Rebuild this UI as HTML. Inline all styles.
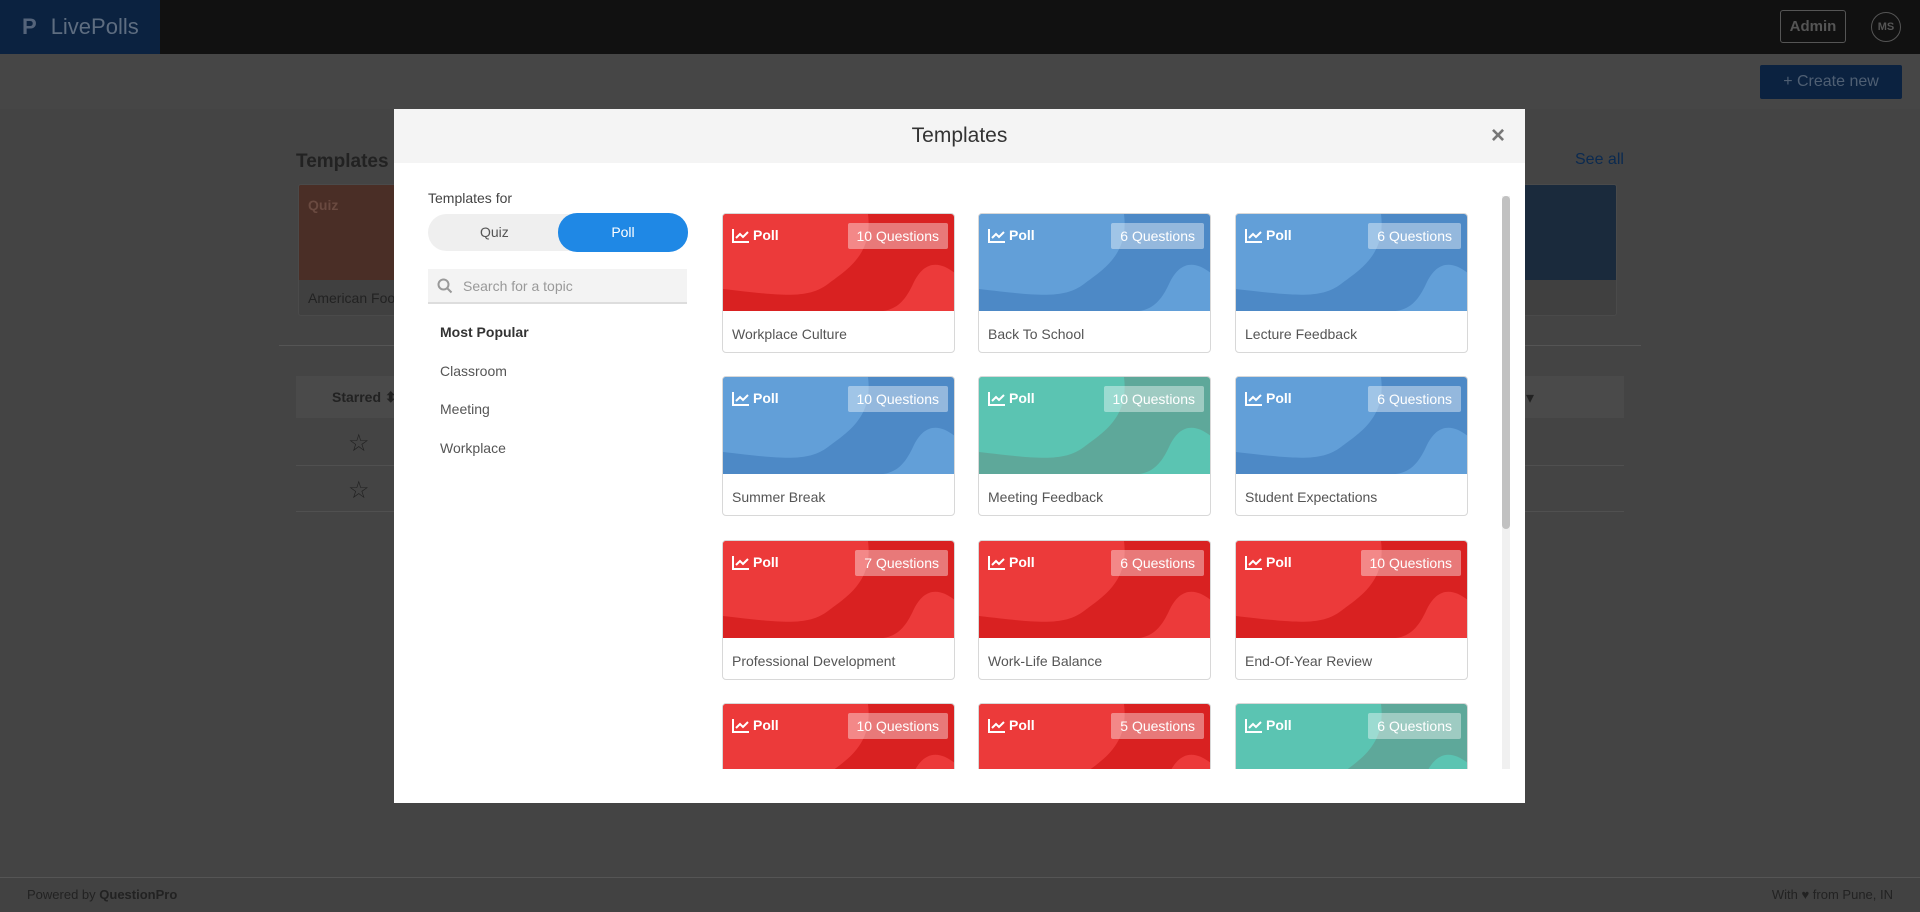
<!DOCTYPE html>
<html style="background:#444"><head><meta charset="utf-8"><style>
*{box-sizing:border-box;margin:0;padding:0}
body{width:1920px;height:912px;overflow:hidden;background:#444;font-family:"Liberation Sans",sans-serif;position:relative;color:#333}
.abs{position:absolute}
.top{left:0;top:0;width:1920px;height:54px;background:#111}
.logo{left:0;top:0;width:160px;height:54px;background:#0b2240;color:#5e6d80;font-size:22px;line-height:54px}
.sub{left:0;top:54px;width:1920px;height:55px;background:#464646}
.modal{left:394px;top:109px;width:1131px;height:694px;background:#fff}
.mh{left:0;top:0;width:1131px;height:54px;background:#f4f4f4;text-align:center;line-height:54px;font-size:21px;color:#333}
.card{position:absolute;width:233px;height:140px;border:1px solid #d8d8d8;border-radius:4px;overflow:hidden;background:#fff}
.card .img{position:absolute;left:0;top:0;width:233px;height:97px;overflow:hidden}
.card .t{position:absolute;left:9px;top:112px;font-size:14px;color:#555}
.badge{position:absolute;right:8px;top:9px;height:26px;padding:0 9px;line-height:26px;color:#fff;font-size:14px;background:rgba(255,255,255,.4);border-radius:2px}
.pl{position:absolute;left:9px;top:13px;color:#fff;font-weight:bold;font-size:14px;display:flex;align-items:center;gap:3px}
.cat{position:absolute;left:46px;font-size:14px;color:#555}
.dim{position:absolute;left:0;top:0;width:1920px;height:912px;background:rgba(0,0,0,0)}
</style></head><body>
<div class="abs top"></div>
<div class="abs logo"><span style="margin-left:22px;font-weight:bold;color:#55647a">P</span><span style="margin-left:14px">LivePolls ⌄</span></div>
<div class="abs" style="left:1780px;top:10px;width:66px;height:33px;border:1px solid #555;border-radius:3px;color:#555;font-size:15px;line-height:31px;text-align:center;font-weight:bold">Admin</div>
<div class="abs" style="left:1871px;top:12px;width:30px;height:30px;border:1px solid #555;border-radius:50%;color:#555;font-size:11px;line-height:28px;text-align:center;font-weight:bold">MS</div>
<div class="abs sub"></div>
<div class="abs" style="left:1760px;top:65px;width:142px;height:34px;background:#0b2240;color:#4f5f73;font-size:16px;line-height:34px;text-align:center;border-radius:2px">+ Create new</div>
<div class="abs" style="left:296px;top:150px;font-size:19px;font-weight:bold;color:#222">Templates ⌄</div>
<div class="abs" style="left:1575px;top:151px;font-size:16px;color:#0b2a50">See all</div>
<div class="abs" style="left:298px;top:184px;width:100px;height:132px;background:#404040;border:1px solid #4a4a4a;border-radius:3px;overflow:hidden"><div style="height:95px;background:#4a2e26"></div><div style="padding:10px 9px;font-size:14px;color:#222;white-space:nowrap">American Food</div><div class="abs" style="left:9px;top:12px;color:#6a4a40;font-weight:bold;font-size:14px">Quiz</div></div>
<div class="abs" style="left:1520px;top:184px;width:97px;height:132px;background:#404040;border:1px solid #4a4a4a;border-radius:3px;overflow:hidden"><div style="height:95px;background:#1a2a3c"></div></div>
<div class="abs" style="left:279px;top:345px;width:1362px;height:1px;background:#555"></div>
<div class="abs" style="left:296px;top:376px;width:1328px;height:42px;background:#4a4a4a"><span style="position:absolute;left:36px;top:13px;font-size:14px;font-weight:bold;color:#222">Starred ⬍</span><span style="position:absolute;left:1230px;top:12px;color:#222">▾</span></div>
<div class="abs" style="left:296px;top:465px;width:1328px;height:1px;background:#505050"></div>
<div class="abs" style="left:296px;top:511px;width:1328px;height:1px;background:#505050"></div>
<div class="abs" style="left:348px;top:429px;font-size:24px;color:#222">☆</div>
<div class="abs" style="left:348px;top:476px;font-size:24px;color:#222">☆</div>
<div class="abs" style="left:0;top:877px;width:1920px;height:35px;background:#424242;border-top:1px solid #555;font-size:13px;color:#222;line-height:34px"><span style="margin-left:27px">Powered by <b>QuestionPro</b></span><span style="position:absolute;right:27px">With ♥ from Pune, IN</span></div>

<div class="abs modal">
<div class="abs mh">Templates</div>
<div class="abs" style="left:1097px;top:13px;font-size:24px;color:#777;font-weight:bold">×</div>
<div class="abs" style="left:34px;top:81px;font-size:14px;color:#444">Templates for</div>
<div class="abs" style="left:34px;top:105px;width:259px;height:37px;background:#efefef;border-radius:19px"><span style="position:absolute;left:52px;top:10px;font-size:14px;color:#555">Quiz</span><div style="position:absolute;left:130px;top:-1px;width:130px;height:39px;background:#1f88e5;border-radius:19px;color:#fff;font-size:14px;line-height:39px;text-align:center">Poll</div></div>
<div class="abs" style="left:34px;top:160px;width:259px;height:35px;background:#f3f3f3;border-bottom:2px solid #ddd"><svg style="position:absolute;left:9px;top:9px" width="16" height="16" viewBox="0 0 16 16"><circle cx="6.5" cy="6.5" r="5" fill="none" stroke="#999" stroke-width="2"/><path d="M10 10l4.5 4.5" stroke="#999" stroke-width="2"/></svg><span style="position:absolute;left:35px;top:9px;font-size:14px;color:#999">Search for a topic</span></div>
<div class="cat" style="top:215px;font-weight:bold;color:#333">Most Popular</div>
<div class="cat" style="top:254px">Classroom</div>
<div class="cat" style="top:292px">Meeting</div>
<div class="cat" style="top:331px">Workplace</div>
<div class="abs" style="left:1108px;top:87px;width:8px;height:573px;background:#f0f0f0"><div style="margin-top:0;height:333px;background:#c1c1c1;border-radius:4px"></div></div>
<div class="abs" style="left:0;top:104px;width:1131px;height:556px;overflow:hidden" id="g"></div>
</div>
<script>
var C={r:['#ec3a3a','#d92121'],b:['#629fd8','#4d89c6'],t:['#5bc4b2','#5ea89a']};
var d=[['r','10 Questions','Workplace Culture'],['b','6 Questions','Back To School'],['b','6 Questions','Lecture Feedback'],
['b','10 Questions','Summer Break'],['t','10 Questions','Meeting Feedback'],['b','6 Questions','Student Expectations'],
['r','7 Questions','Professional Development'],['r','6 Questions','Work-Life Balance'],['r','10 Questions','End-Of-Year Review'],
['r','10 Questions',''],['r','5 Questions',''],['t','6 Questions','']];
var xs=[328,584,841],ys=[0,163,327,490],h='';
d.forEach(function(c,i){var k=C[c[0]];h+='<div class="card" style="left:'+xs[i%3]+'px;top:'+ys[Math.floor(i/3)]+'px"><div class="img" style="background:'+k[1]+'"><svg width="233" height="97" style="position:absolute;left:0;top:0"><path d="M0 0H145C150 40 125 55 105 70C85 85 60 82 0 75Z" fill="'+k[0]+'"/><path d="M233 60C215 45 200 48 190 70C183 85 175 95 160 97H233Z" fill="'+k[0]+'"/></svg><div class="pl"><svg width="18" height="15" viewBox="0 0 18 15"><path d="M1 1V14H17" stroke="#fff" stroke-width="2" fill="none"/><path d="M4 10L8 6L11 9L16 4" stroke="#fff" stroke-width="2" fill="none"/></svg>Poll</div><div class="badge">'+c[1]+'</div></div><div class="t">'+c[2]+'</div></div>';});
document.getElementById('g').innerHTML=h;
</script>
</body></html>
